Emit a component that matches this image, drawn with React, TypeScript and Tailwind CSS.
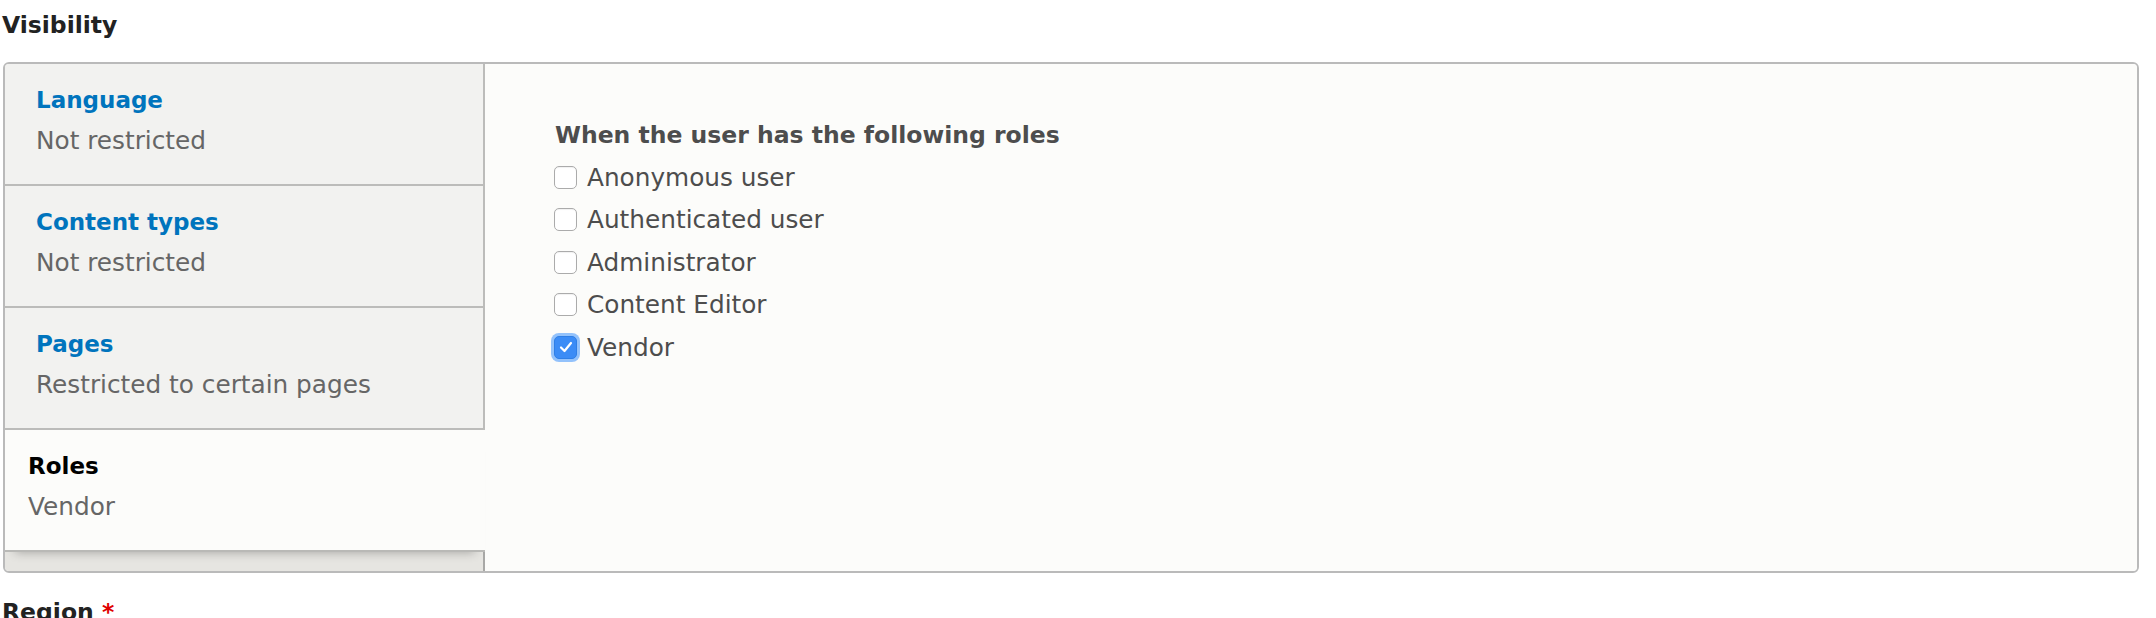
import React from "react";

type Tab = {
  title: string;
  summary: string;
  selected?: boolean;
};

const tabs: Tab[] = [
  { title: "Language", summary: "Not restricted" },
  { title: "Content types", summary: "Not restricted" },
  { title: "Pages", summary: "Restricted to certain pages" },
  { title: "Roles", summary: "Vendor", selected: true },
];

const roles = [
  { label: "Anonymous user", checked: false },
  { label: "Authenticated user", checked: false },
  { label: "Administrator", checked: false },
  { label: "Content Editor", checked: false },
  { label: "Vendor", checked: true },
];

function TabItem({ tab }: { tab: Tab }) {
  if (tab.selected) {
    return (
      <div className="relative z-10 box-border h-[122px] border-b-2 border-[#b9b9b6] bg-[#fcfcfa] pl-[23px] pt-[16px] shadow-[0_10px_10px_-10px_rgba(0,0,0,0.3)]">
        <div className="text-[23px] font-bold leading-[40px] text-black">{tab.title}</div>
        <div className="text-[24.75px] leading-[42px] text-[#666]">{tab.summary}</div>
      </div>
    );
  }
  return (
    <div className="box-border h-[122px] border-b-2 border-r-2 border-[#bcbcba] bg-[#f2f2f0] pl-[31px] pt-[16px]">
      <a href="#" className="block text-[23px] font-bold leading-[40px] text-[#0074bd]">
        {tab.title}
      </a>
      <div className="text-[24.75px] leading-[42px] text-[#666]">{tab.summary}</div>
    </div>
  );
}

function Checkbox({ checked }: { checked: boolean }) {
  if (checked) {
    return (
      <span className="flex h-[23px] w-[23px] items-center justify-center rounded-[5px] border border-[#2f7fe6] bg-[#3b8cf6] shadow-[0_0_0_3px_#93c2fb]">
        <svg width="14" height="12" viewBox="0 0 14 12" fill="none">
          <path d="M2 6.5 L5.5 10 L12 2" stroke="white" strokeWidth="2.2" strokeLinecap="round" strokeLinejoin="round" />
        </svg>
      </span>
    );
  }
  return (
    <span className="block h-[23px] w-[23px] rounded-[5px] border border-[#ababab] bg-white shadow-[inset_0_1px_1px_rgba(0,0,0,0.06)]" />
  );
}

export default function App() {
  return (
    <div className="min-h-[618px] bg-white pl-[2px] font-['DejaVu_Sans',sans-serif]">
      <h2 className="pt-[8px] text-[23.5px] font-bold leading-[34px] text-[#222]">Visibility</h2>

      <div className="ml-[1px] mt-[20px] flex h-[511px] w-[2136px] overflow-hidden rounded-[6px] border-2 border-[#bababa] bg-[#fcfcfa]">
        <div className="flex w-[480px] flex-col bg-[#e6e5e1]">
          {tabs.map((tab) => (
            <TabItem key={tab.title} tab={tab} />
          ))}
          <div className="flex-1 border-r-2 border-[#a8a8a6]" />
        </div>

        <div className="flex-1 bg-[#fcfcfa] pl-[69px] pt-[54px]">
          <div className="pl-[1px] text-[23.5px] font-bold leading-[34px] text-[#4d4d4d]">
            When the user has the following roles
          </div>
          <div className="mt-[4px] flex flex-col">
            {roles.map((role) => (
              <label key={role.label} className="flex h-[42.5px] items-center gap-[10px]">
                <Checkbox checked={role.checked} />
                <span className="text-[24.75px] text-[#4d4d4d]">{role.label}</span>
              </label>
            ))}
          </div>
        </div>
      </div>

      <h2 className="mt-[22px] text-[23.5px] font-bold leading-[34px] text-[#222]">
        Region <span className="text-[#e00000]">*</span>
      </h2>
    </div>
  );
}
